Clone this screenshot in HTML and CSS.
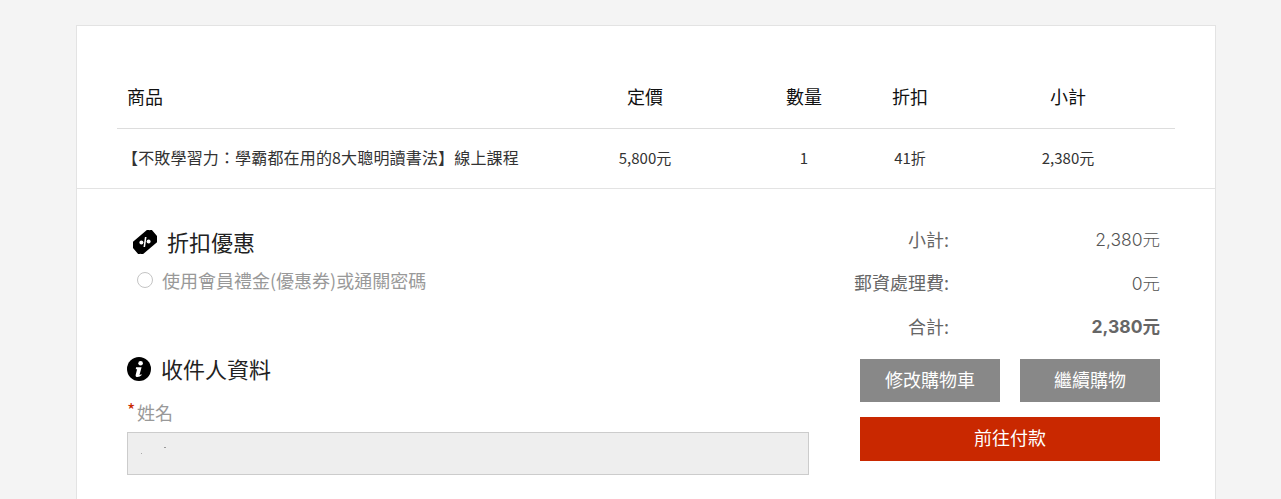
FILE: index.html
```html
<!DOCTYPE html>
<html lang="zh-Hant">
<head>
  <meta charset="UTF-8">
  <meta name="viewport" content="width=device-width, initial-scale=1.0">
  <title>購物車</title>
  <link rel="stylesheet" href="styles.css">
</head>
<body>
  <div class="cart-card">
    <!-- Items table -->
    <div class="cart-table">
      <div class="cart-row cart-head">
        <div class="col-name">商品</div>
        <div>定價</div>
        <div>數量</div>
        <div>折扣</div>
        <div>小計</div>
      </div>
      <div class="cart-row cart-item">
        <div class="col-name">【不敗學習力：學霸都在用的8大聰明讀書法】線上課程</div>
        <div>5,800元</div>
        <div>1</div>
        <div>41折</div>
        <div>2,380元</div>
      </div>
    </div>

    <div class="checkout">
      <!-- Left column -->
      <div class="checkout-form">
        <h2 class="section-title title-discount">
          <svg class="icon" width="24" height="24" viewBox="0 0 24 24">
            <path fill="#000" transform="rotate(-40 12 12)" d="M1.500 4h21a2.500 2.500 0 0 0 2.500 2.500v11a2.500 2.500 0 0 0-2.500 2.500h-21a2.500 2.500 0 0 0-2.500-2.500v-11a2.500 2.500 0 0 0 2.500-2.500Z"/>
            <circle cx="8.400" cy="12.600" r="2" fill="#fff"/>
            <circle cx="15.600" cy="11.400" r="2" fill="#fff"/>
            <path stroke="#fff" stroke-width="1.600" d="M12.700 7 11.300 17"/>
          </svg>
          折扣優惠
        </h2>
        <label class="radio-row">
          <input type="radio" name="discount">
          使用會員禮金(優惠券)或通關密碼
        </label>

        <h2 class="section-title title-info">
          <svg class="icon" width="24" height="24" viewBox="0 0 24 24">
            <circle cx="12" cy="12" r="12" fill="#000"/>
            <circle cx="13.600" cy="6.200" r="2.300" fill="#fff"/>
            <path fill="#fff" d="M9 10.200h5.600l-2 7.200c-.1.5.3.6.7.4l1.100-.6.3.9c-1.300 1.300-2.600 2-4.200 2-1.500 0-2.200-.9-1.800-2.300l1.400-5.500H8.800Z"/>
          </svg>
          收件人資料
        </h2>
        <label class="field-label" for="buyer-name"><span class="required">*</span>姓名</label>
        <input class="field-input" id="buyer-name" type="text" disabled>
      </div>

      <!-- Right column -->
      <div class="checkout-summary">
        <div class="sum-row"><span class="sum-label">小計:</span><span class="sum-value">2,380元</span></div>
        <div class="sum-row"><span class="sum-label">郵資處理費:</span><span class="sum-value">0元</span></div>
        <div class="sum-row"><span class="sum-label">合計:</span><span class="sum-value sum-total">2,380元</span></div>
        <div class="btn-row">
          <button class="btn btn-gray">修改購物車</button>
          <button class="btn btn-gray">繼續購物</button>
        </div>
        <button class="btn btn-red">前往付款</button>
      </div>
    </div>
  </div>
</body>
</html>
```

FILE: styles.css
```css
html, body {
  height: 100%;
}

body {
  margin: 0;
  overflow: hidden;
  background: #f4f4f4;
  color: #333;
  font-family: "Noto Sans CJK TC", sans-serif;
}

.cart-card {
  width: 1140px;
  height: 474px;
  box-sizing: border-box;
  margin: 25px 0 0 76px;
  background: #fff;
  border: 1px solid #e3e3e3;
  border-bottom: none;
}

.cart-table {
  padding: 40px 40px 0;
  border-bottom: 1px solid #e3e3e3;
}

.cart-row {
  display: grid;
  grid-template-columns: 424px 208px 110px 102px 214px;
  align-items: center;
  text-align: center;
}

.cart-head {
  height: 59px;
  padding-bottom: 3px;
  font-size: 18px;
  color: #111;
  border-bottom: 1px solid #ddd;
}

.cart-item {
  height: 56px;
  padding-bottom: 3px;
  font-size: 15px;
  color: #333;
}

.col-name {
  padding-left: 10px;
  text-align: left;
  white-space: nowrap;
}

.cart-item .col-name {
  font-size: 16px;
  letter-spacing: .16px;
  padding-left: 5px;
}

.checkout {
  display: flex;
  gap: 51px;
  padding-left: 50px;
}

.checkout-form {
  width: 682px;
  padding-top: 38px;
}

.section-title {
  display: flex;
  align-items: center;
  gap: 10px;
  height: 27px;
  padding-bottom: 3px;
  margin: 0;
  font-size: 22px;
  line-height: 26px;
  font-weight: 400;
  color: #222;
}

.section-title .icon {
  margin-top: 3px;
}

.title-discount {
  padding-left: 6px;
}

.title-info {
  margin-top: 61px;
}

.radio-row {
  display: flex;
  align-items: center;
  gap: 9px;
  height: 26px;
  margin-top: 10px;
  padding-left: 10px;
  font-size: 18px;
  color: #999;
}

.radio-row input {
  appearance: none;
  width: 16px;
  height: 16px;
  margin: 0;
  border: 1px solid #c4c4c4;
  border-radius: 50%;
  background: #fff;
}

.field-label {
  display: flex;
  height: 26px;
  margin-top: 15px;
  padding-bottom: 1px;
  font-size: 18px;
  line-height: 26px;
  color: #999;
}

.required {
  width: 10px;
  margin-top: -3px;
  color: #c92800;
}

.field-input {
  display: block;
  width: 100%;
  height: 43px;
  box-sizing: border-box;
  margin-top: 6px;
  background:
    linear-gradient(#aaa, #aaa) 13px 20px / 1px 1px no-repeat,
    linear-gradient(#999, #999) 36px 14px / 2px 1px no-repeat,
    #eee;
  border: 1px solid #ccc;
}

.checkout-summary {
  width: 300px;
  padding-top: 28px;
}

.sum-row {
  display: flex;
  align-items: center;
  height: 43.5px;
  font-size: 18px;
  color: #666;
}

.sum-label {
  display: flex;
  justify-content: flex-end;
  width: 89px;
  white-space: nowrap;
}

.sum-value {
  flex: 1;
  text-align: right;
  font-family: "Inter", "Noto Sans CJK TC", sans-serif;
  font-size: 17.5px;
  font-weight: 300;
  color: #555;
}

.sum-total {
  font-weight: 700;
  color: #666;
}

.btn-row {
  display: flex;
  justify-content: space-between;
  margin-top: 11px;
}

.btn {
  display: block;
  border: none;
  padding: 0 0 3px;
  color: #fff;
  font-family: inherit;
  font-size: 18px;
}

.btn-gray {
  width: 140px;
  height: 43px;
  background: #888;
}

.btn-red {
  width: 300px;
  height: 44px;
  margin-top: 15px;
  background: #c92800;
}
```
